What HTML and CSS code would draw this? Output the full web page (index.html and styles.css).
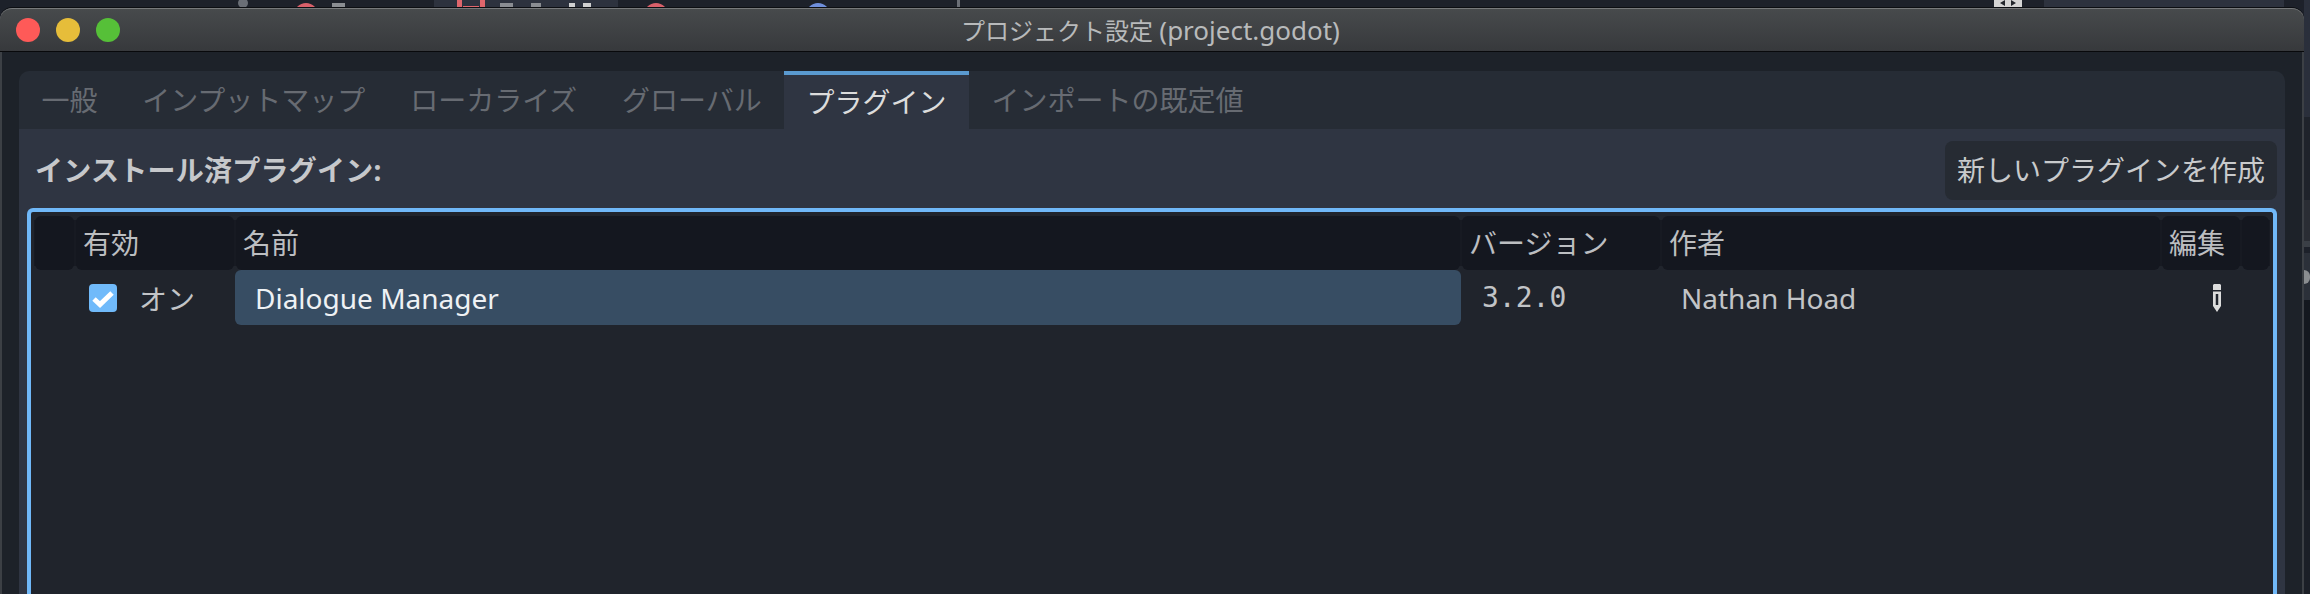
FILE: index.html
```html
<!DOCTYPE html>
<html lang="ja">
<head>
    <meta charset="UTF-8">
    <title>プロジェクト設定 (project.godot)</title>
    <link rel="stylesheet" href="styles.css">
</head>
<body>
    <div class="desktop">
        <div class="main">
            <!-- editor behind the dialog, only a few pixels show -->
            <div class="backdrop">
                <span class="dot"></span>
                <span class="arc red arc1"></span>
                <span class="bit bit1"></span>
                <div class="bg_tab">
                    <span class="red_box"></span>
                    <span class="bit bit2"></span>
                    <span class="bit bit3"></span>
                    <span class="bit bit4"></span>
                    <span class="bit bit5"></span>
                </div>
                <span class="arc red arc2"></span>
                <span class="arc blue arc3"></span>
                <span class="bg_line"></span>
                <span class="bg_icon">
                    <svg width="28" height="8" viewBox="0 0 28 8">
                        <path d="M11 0L6 3l5 3zM17 0l5 3-5 3z" fill="#23262c"/>
                    </svg>
                </span>
                <div class="bg_panel"></div>
            </div>

            <div class="window">
                <div class="titlebar">
                    <div class="lights">
                        <span class="light close"></span>
                        <span class="light min"></span>
                        <span class="light max"></span>
                    </div>
                    <div class="title">プロジェクト設定 <span class="title_file">(project.godot)</span></div>
                </div>

                <div class="content">
                    <div class="tabs">
                        <div class="tab">一般</div>
                        <div class="tab">インプットマップ</div>
                        <div class="tab">ローカライズ</div>
                        <div class="tab">グローバル</div>
                        <div class="tab active">プラグイン</div>
                        <div class="tab">インポートの既定値</div>
                    </div>

                    <div class="panel">
                        <div class="panel_head">
                            <div class="panel_title">インストール済プラグイン:</div>
                            <button class="new_btn">新しいプラグインを作成</button>
                        </div>

                        <div class="tree">
                            <div class="row head_row">
                                <div class="head"></div>
                                <div class="head">有効</div>
                                <div class="head">名前</div>
                                <div class="head">バージョン</div>
                                <div class="head">作者</div>
                                <div class="head">編集</div>
                                <div class="head"></div>
                            </div>
                            <div class="row data_row">
                                <div class="cell"></div>
                                <div class="cell check_cell">
                                    <span class="checkbox">
                                        <svg width="28" height="28" viewBox="0 0 28 28">
                                            <path d="M5 15l6 5.5L23 9" fill="none" stroke="#fff" stroke-width="5"/>
                                        </svg>
                                    </span>
                                    <span>オン</span>
                                </div>
                                <div class="cell selected">Dialogue Manager</div>
                                <div class="cell version">3.2.0</div>
                                <div class="cell author">Nathan Hoad</div>
                                <div class="cell edit_cell">
                                    <svg width="8" height="28" viewBox="0 0 8 28">
                                        <path d="M1 0h6l1 1v5H0V1z" fill="#dcdcdc"/>
                                        <path d="M0 7.5h8V22l-4 6-4-6z" fill="#dcdcdc"/>
                                        <rect x="2.75" y="10" width="2.5" height="11" fill="#20242c"/>
                                    </svg>
                                </div>
                                <div class="cell"></div>
                            </div>
                        </div>
                    </div>
                </div>
            </div>
        </div>

        <div class="side">
            <div class="side_a"></div>
            <div class="side_b"></div>
            <div class="side_c"></div>
            <div class="side_d"></div>
            <div class="side_b2"></div>
            <div class="side_e"><span class="side_blob"></span></div>
            <div class="side_f"></div>
            <div class="side_g"></div>
        </div>
    </div>
</body>
</html>
```

FILE: styles.css
```css
*{
    box-sizing: border-box;
}

html, body{
    margin: 0;
    height: 594px;
    overflow: hidden;
    background-color: #1d212a;
}

body{
    font-family: "Noto Sans", "Noto Sans CJK JP", sans-serif;
    font-size: 28px;
    color: #c2c4c7;
}

.desktop{
    display: flex;
    height: 594px;
}

.main{
    width: 2304px;
    flex-shrink: 0;
    display: flex;
    flex-direction: column;
}

/* strip above the window */
.backdrop{
    height: 8px;
    flex-shrink: 0;
    display: flex;
    overflow: hidden;
    background-color: #1d212a;
}

.dot{
    width: 10px;
    height: 10px;
    margin: -2px 0 0 238px;
    border-radius: 50%;
    background-color: #6a6e76;
}

.arc{
    width: 24px;
    height: 24px;
    border-radius: 50%;
    margin-top: 3px;
    flex-shrink: 0;
}

.red{
    background-color: #d9606a;
}

.blue{
    background-color: #6f8fdc;
}

.arc1{
    margin-left: 46px;
}

.bit{
    height: 5px;
    margin-top: 3px;
    background-color: #8a8d92;
}

.bit1{
    width: 13px;
    margin-left: 14px;
}

.bg_tab{
    width: 184px;
    margin-left: 89px;
    display: flex;
    background-color: #2d323e;
}

.red_box{
    width: 28px;
    height: 8px;
    margin-left: 23px;
    border: solid #e0666c;
    border-width: 0 5px;
    background: linear-gradient(#e0666c, #e0666c) center 6px / 16px 1px no-repeat;
}

.bit2{
    width: 13px;
    margin-left: 15px;
}

.bit3{
    width: 10px;
    margin-left: 18px;
}

.bit4{
    width: 6px;
    margin-left: 28px;
    background-color: #d0d0d0;
}

.bit5{
    width: 8px;
    margin-left: 8px;
    background-color: #d0d0d0;
}

.arc2{
    margin-left: 26px;
}

.arc3{
    margin-left: 138px;
}

.bg_line{
    width: 3px;
    margin-left: 127px;
    background-color: #6a6e76;
}

.bg_icon{
    width: 28px;
    margin-left: 1034px;
    background-color: #d5d5d5;
}

.bg_icon svg{
    display: block;
}

.bg_panel{
    width: 240px;
    margin-left: 22px;
    background-color: #2d323e;
}

.window{
    flex: 1;
    min-height: 0;
    display: flex;
    flex-direction: column;
    border-radius: 12px 12px 0 0;
    border: solid #3c4045;
    border-width: 0 2px;
    background-color: #1d2229;
    box-shadow: 0 -1px 0 #0c0e12;
}

.titlebar{
    height: 44px;
    flex-shrink: 0;
    margin: 0 -2px;
    padding: 0 16px;
    display: flex;
    align-items: center;
    border-radius: 12px 12px 0 0;
    border-top: 1px solid #77797b;
    border-bottom: 1px solid #08090b;
    background: linear-gradient(#474a4c, #37393c);
}

.lights{
    display: flex;
    gap: 16px;
    width: 104px;
    flex-shrink: 0;
}

.light{
    width: 24px;
    height: 24px;
    border-radius: 50%;
}

.close{
    background-color: #fe5a58;
}

.min{
    background-color: #e6bd3a;
}

.max{
    background-color: #56c038;
}

.title{
    flex: 1;
    margin-right: 107px;
    text-align: center;
    font-size: 24px;
    line-height: 42px;
    color: #b8babb;
}

.title_file{
    font-size: 26px;
}

.content{
    flex: 1;
    min-height: 0;
    padding: 19px 17px 0;
    display: flex;
    flex-direction: column;
}

.tabs{
    display: flex;
    height: 58px;
    flex-shrink: 0;
    border-radius: 10px 10px 0 0;
    background-color: #262c35;
    overflow: hidden;
}

.tab{
    padding: 0 22.4px;
    line-height: 58px;
    color: #676b72;
}

.tab.active{
    background-color: #2f3542;
    border-top: 4px solid #5a9ad0;
    line-height: 54px;
    color: #dcdcdc;
}

.panel{
    flex: 1;
    min-height: 0;
    display: flex;
    flex-direction: column;
    padding: 12px 8px 0;
    background-color: #2f3542;
}

.panel_head{
    display: flex;
    justify-content: space-between;
    align-items: center;
    flex-shrink: 0;
    padding-left: 8px;
    margin-bottom: 8px;
}

.panel_title{
    margin-top: -3px;
    font-weight: bold;
    letter-spacing: 0.25px;
    color: #c6c8cb;
}

.new_btn{
    height: 59px;
    width: 332px;
    padding: 0 12px 3px;
    border: 0;
    border-radius: 8px;
    background-color: #262b33;
    font: inherit;
    color: #c8cacc;
    white-space: nowrap;
}

.tree{
    flex: 1;
    min-height: 0;
    padding: 4px 3px 0;
    border: 4px solid #70b8f8;
    border-bottom: 0;
    border-radius: 6px 6px 0 0;
    background-color: #20242c;
}

.row{
    display: grid;
    grid-template-columns: 41px 160px 1226px 200px 500px 80px 29px;
}

/* gaps between header cells are only notches at the corners */
.head_row{
    height: 54px;
    background: linear-gradient(#20242c 4px, #171a22 4px, #171a22 50px, #20242c 50px);
}

.head{
    margin: 0 1px;
    padding-left: 7px;
    border-radius: 6px;
    line-height: 54px;
    background-color: #14171f;
    color: #bcbec1;
    white-space: nowrap;
}

.data_row{
    height: 55px;
}

.cell{
    display: flex;
    align-items: center;
    padding-left: 20px;
    color: #c2c4c7;
}

.check_cell{
    padding-left: 14px;
    gap: 22px;
}

.checkbox{
    width: 28px;
    height: 28px;
    display: block;
    border-radius: 4px;
    background-color: #70bafa;
}

.checkbox svg{
    display: block;
}

.selected{
    border-radius: 6px;
    background-color: #374d63;
    color: #eef1f4;
}

.version{
    font-family: "DejaVu Sans Mono", monospace;
    padding-left: 21px;
}

.edit_cell{
    justify-content: flex-end;
    padding: 0 20px 0 0;
}

/* right edge, other window behind */
.side{
    flex: 1;
    display: flex;
    flex-direction: column;
}

.side_a{
    height: 117px;
    background-color: #2a2f3b;
}

.side_b{
    height: 83px;
    background-color: #1f232b;
}

.side_c{
    height: 41px;
    background-color: #2a2d34;
}

.side_d{
    height: 6px;
    background-color: #3a3f46;
}

.side_b2{
    height: 6px;
    background-color: #1d212a;
}

.side_e{
    height: 47px;
    display: flex;
    align-items: center;
    background-color: #2b3039;
}

.side_blob{
    width: 6px;
    height: 14px;
    background-color: #8a8d90;
    border-radius: 0 7px 7px 0;
}

.side_f{
    height: 190px;
    background-color: #14181f;
}

.side_g{
    flex: 1;
    background-color: #1b1f27;
}
```
